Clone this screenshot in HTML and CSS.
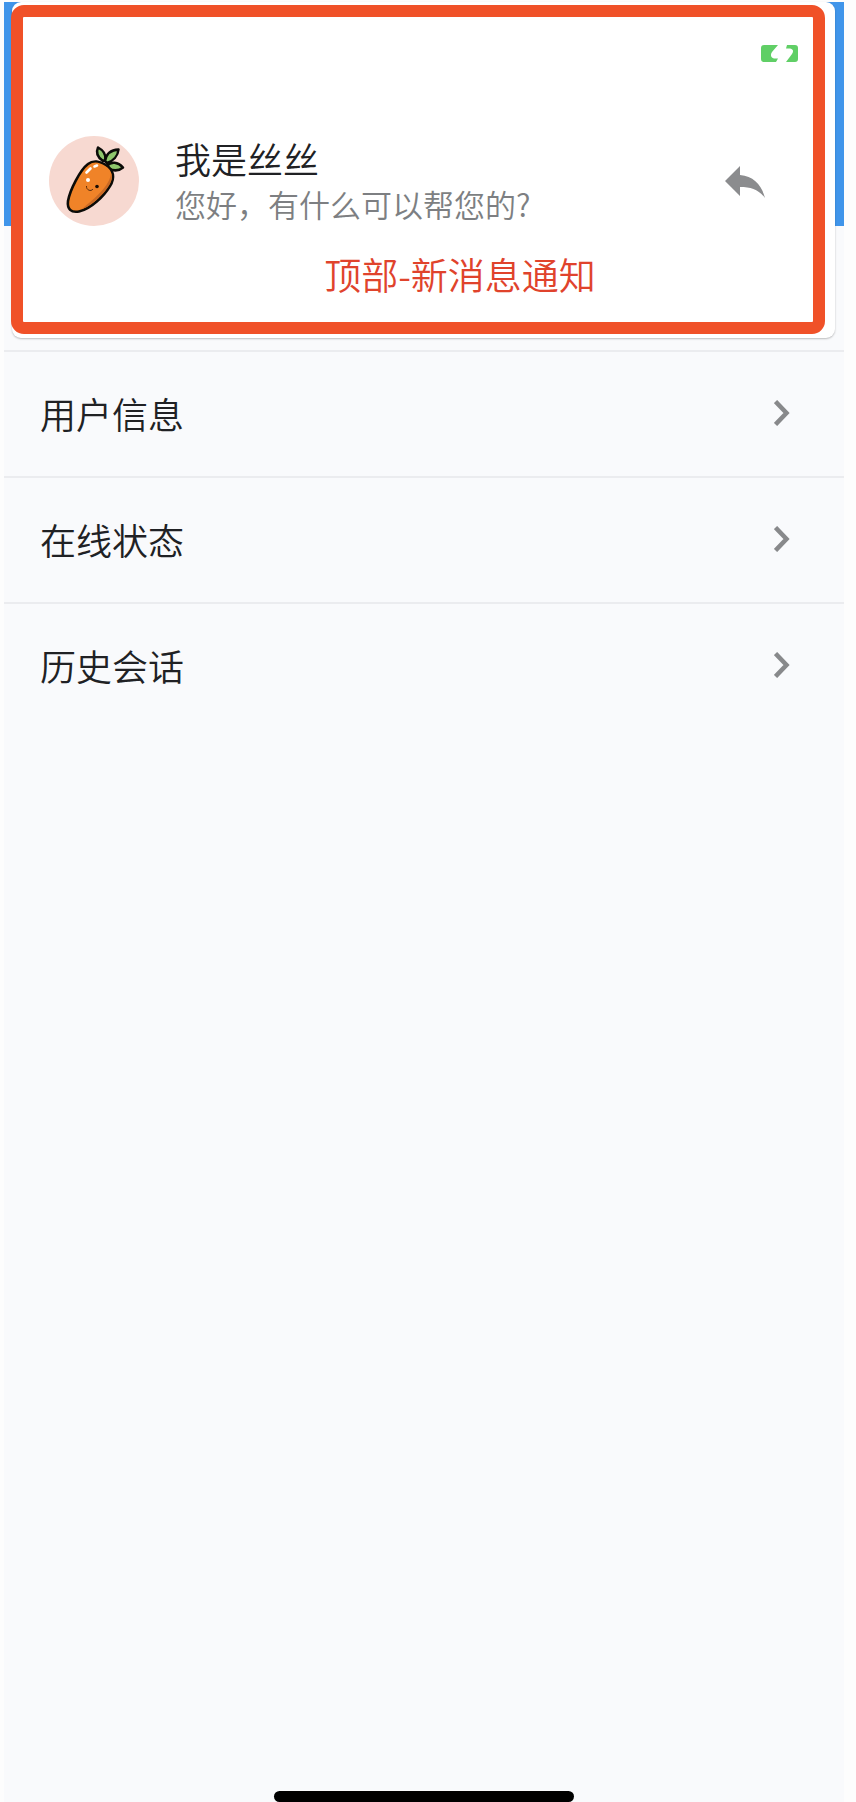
FILE: index.html
```html
<!DOCTYPE html>
<html lang="zh-CN">
<head>
<meta charset="utf-8">
<meta name="viewport" content="width=device-width, initial-scale=1">
<title>新消息通知</title>
<link rel="stylesheet" href="styles.css">
</head>
<body>
<div class="phone">
  <header class="app-bar"></header>
  <main class="menu">
    <a class="menu-item" href="#user">用户信息
      <svg class="chevron" viewBox="0 0 16 26" aria-hidden="true"><path d="M1.500 1.500L12.500 13L1.500 24.500"/></svg>
    </a>
    <a class="menu-item" href="#status">在线状态
      <svg class="chevron" viewBox="0 0 16 26" aria-hidden="true"><path d="M1.500 1.500L12.500 13L1.500 24.500"/></svg>
    </a>
    <a class="menu-item" href="#history">历史会话
      <svg class="chevron" viewBox="0 0 16 26" aria-hidden="true"><path d="M1.500 1.500L12.500 13L1.500 24.500"/></svg>
    </a>
  </main>
  <div class="home-indicator"></div>

  <section class="notification">
    <div class="frame">
      <div class="status">
        <svg class="battery" viewBox="0 0 37 17" aria-hidden="true">
          <path d="M3 0H17L11 7C9 10 10 13 13 13.500H17L15 17H3Q0 17 0 14V3Q0 0 3 0Z"/>
          <path d="M26 0H34Q37 0 37 3V14Q37 17 34 17H25L31 9C33 6 32 4 29 3.500H25Z"/>
        </svg>
      </div>
      <div class="message">
        <svg class="avatar" viewBox="9 11 90 90" role="img" aria-label="头像">
          <circle class="avatar-bg" cx="54" cy="56" r="45"/>
          <g class="leaves">
            <path d="M63 36C57 32 56 27 58 22.500C63 25 66 29 65.500 35Z"/>
            <path d="M65 36C66 30 70 25 78.500 24.500C78 31 73 36 67 38Z"/>
            <path d="M67 41C71 36 78 37 83 42.500C79 46 74 46 69 44Z"/>
          </g>
          <path class="carrot" d="M48 39C53 35 60 36 66 40C74 45 75 53 70 61C64 71 51 84 39 86.500C31 88 27 84 28 76C30 65 40 45 48 39Z"/>
          <path class="shade" d="M71 48C70 61 55 73 42 84C53 80 65 68 70 59C72 55 73 51 71 48Z"/>
          <path class="shine" d="M46.500 47.500L50.500 43.500M54.500 41.500L57 40.500"/>
          <circle class="glint" cx="48" cy="55" r="2"/>
          <circle class="eye" cx="57" cy="61.500" r="1.800"/>
          <path class="smile" d="M46.500 61C46 65 51 67 53 64"/>
        </svg>
        <div class="text">
          <h1 class="name">我是丝丝</h1>
          <p class="preview">您好，有什么可以帮您的?</p>
        </div>
        <button class="reply" type="button" aria-label="回复">
          <svg viewBox="0 0 40 32" aria-hidden="true"><path d="M0 15L15 0V9C29 10 37 20 40 32C33 23 26 21 15 21V30Z"/></svg>
        </button>
      </div>
      <p class="caption">顶部-新消息通知</p>
    </div>
  </section>
</div>
</body>
</html>
```
FILE: styles.css
```css
* {
  box-sizing: border-box;
}

body {
  margin: 0;
  padding: 2px 12px 0 4px;
  background: #fdfdfd;
  color: #202124;
  font-family: "Noto Sans CJK SC", sans-serif;
  font-size: 36px;
  font-weight: 350;
  line-height: 48px;
}

h1,
p {
  margin: 0;
  font-weight: inherit;
}

.phone {
  position: relative;
  display: flex;
  flex-direction: column;
  min-height: calc(100vh - 2px);
  background: #f9fafc;
}

.app-bar {
  height: 224px;
  background: #4095ea;
}

.menu {
  flex: 1;
  padding-top: 124px;
}

.menu-item {
  display: flex;
  align-items: center;
  justify-content: space-between;
  padding: 37px 54px 39px 36px;
  border-top: 2px solid #ebecef;
  color: inherit;
  text-decoration: none;
}

.chevron {
  width: 16px;
  height: 26px;
  fill: none;
  stroke: #88898b;
  stroke-width: 4.5;
}

.home-indicator {
  align-self: center;
  width: 300px;
  height: 11px;
  border-radius: 6px;
  background: #000;
}

/* Banner that drops over the page */
.notification {
  position: absolute;
  top: 0;
  left: 8px;
  right: 9px;
  padding: 3px 10px 4px 0;
  border-radius: 9px;
  background: #fff;
  box-shadow: 0 1px 2px rgba(0, 0, 0, 0.25);
}

.frame {
  margin-left: -1px;
  padding: 28px 0 24px;
  border: 12px solid #f05128;
  border-radius: 13px;
  background: #fff;
}

.status {
  display: flex;
  justify-content: flex-end;
  padding-right: 15px;
}

.battery {
  width: 37px;
  height: 17px;
  fill: #60cf66;
}

.message {
  display: flex;
  align-items: center;
  gap: 36px;
  margin-top: 74px;
  padding: 0 48px 0 26px;
}

.avatar {
  flex: none;
  width: 90px;
  height: 90px;
}

.avatar-bg {
  fill: #f7d9d1;
}

.leaves {
  fill: #8ec76c;
  stroke: #0b0b08;
  stroke-width: 2.5;
  stroke-linejoin: round;
}

.carrot {
  fill: #f08328;
  stroke: #0b0b08;
  stroke-width: 2.6;
}

.shade {
  fill: #c96a25;
}

.shine {
  fill: none;
  stroke: #fff;
  stroke-width: 2.6;
  stroke-linecap: round;
}

.glint {
  fill: #fff;
}

.eye {
  fill: #1a0d05;
}

.smile {
  fill: none;
  stroke: #5a2c0c;
  stroke-width: 1;
}

.text {
  flex: 1;
}

.name {
  margin-bottom: 2px;
  font-size: 36px;
  line-height: 44px;
}

.preview {
  color: #7d7f82;
  font-size: 31px;
  line-height: 44px;
}

.reply {
  display: flex;
  padding: 2px 0 0;
  border: 0;
  background: none;
}

.reply svg {
  width: 40px;
  height: 32px;
  fill: #8b8c8e;
}

.caption {
  margin-top: 24px;
  padding-left: 84px;
  color: #e0432c;
  font-size: 37px;
  text-align: center;
}
```
